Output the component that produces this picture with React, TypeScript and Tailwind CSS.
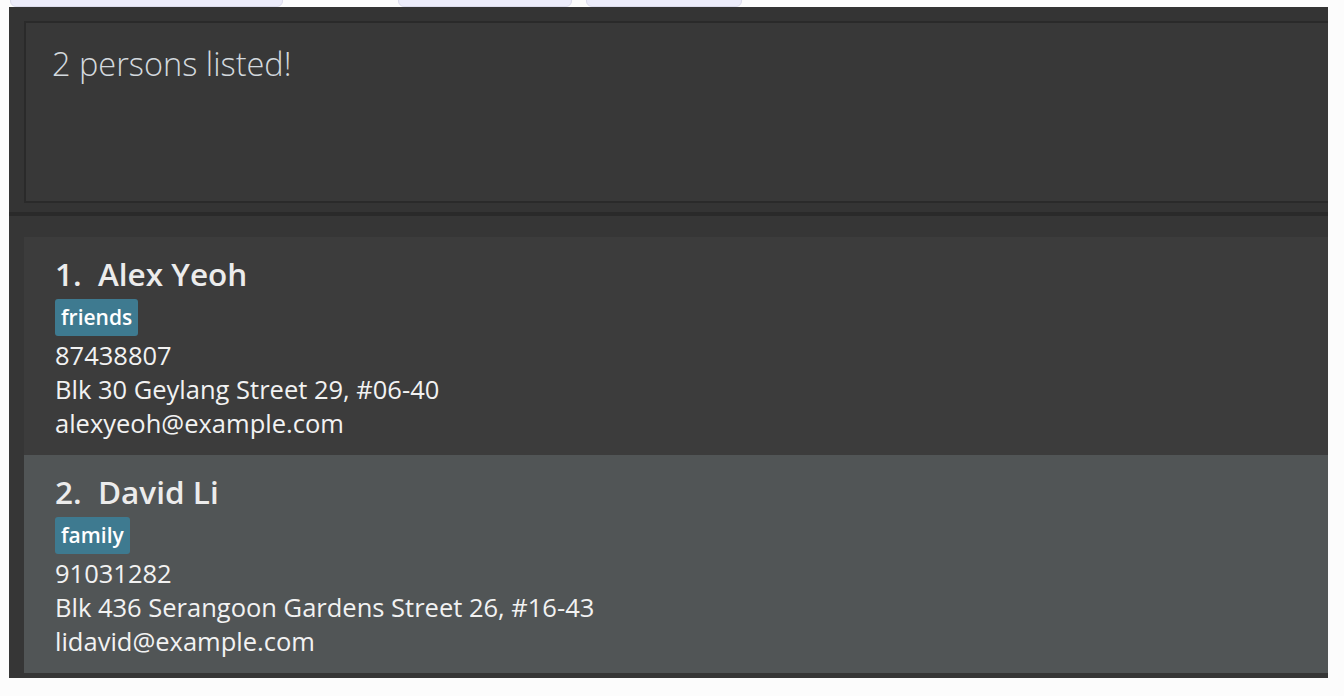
import React from "react";

interface Person {
  name: string;
  tag: string;
  phone: string;
  address: string;
  email: string;
}

const persons: Person[] = [
  {
    name: "Alex Yeoh",
    tag: "friends",
    phone: "87438807",
    address: "Blk 30 Geylang Street 29, #06-40",
    email: "alexyeoh@example.com",
  },
  {
    name: "David Li",
    tag: "family",
    phone: "91031282",
    address: "Blk 436 Serangoon Gardens Street 26, #16-43",
    email: "lidavid@example.com",
  },
];

const font = { fontFamily: '"Open Sans", "Noto Sans", sans-serif' };

const PersonCard = ({ person, index }: { person: Person; index: number }) => {
  const bg = index % 2 === 0 ? "bg-[#3c3c3c]" : "bg-[#515556]";
  return (
    <div className={`${bg} h-[218px] pl-[31px] pt-[16px] flex flex-col`}>
      <div className="text-[31.5px] font-semibold leading-[42px] text-[#ececec] whitespace-pre">
        {index + 1}.  {person.name}
      </div>
      <div className="flex mt-[4px]">
        <span className="bg-[#3e7a90] text-white text-[21px] font-semibold leading-[37px] px-[6px] rounded-[3px]">
          {person.tag}
        </span>
      </div>
      <div className="text-[25.5px] leading-[34px] text-[#f2f2f2] mt-[2px]">
        <div>{person.phone}</div>
        <div>{person.address}</div>
        <div>{person.email}</div>
      </div>
    </div>
  );
};

export default function App() {
  return (
    <div className="w-[1344px] h-[696px] bg-[#fcfcfc] overflow-hidden" style={font}>
      <div className="h-[7px] flex items-end overflow-hidden pl-[10px]">
        <div className="w-[273px] h-[30px] shrink-0 bg-[#ececfa] border border-[#dcdcec] rounded-md" />
        <div className="w-[174px] h-[30px] shrink-0 ml-[115px] bg-[#ececfa] border border-[#dcdcec] rounded-md" />
        <div className="w-[156px] h-[30px] shrink-0 ml-[14px] bg-[#ececfa] border border-[#dcdcec] rounded-md" />
      </div>
      <div className="ml-[9px] w-[1319px] h-[671px] bg-[#343434] overflow-hidden flex flex-col">
        <div className="pt-[14px] pl-[15px]">
          <div className="h-[182px] border-2 border-r-0 border-[#2a2a2a] bg-[#383838] pl-[26px] pt-[19px]">
            <div className="text-[32.5px] font-light leading-[44px] text-[#d3d9de]">2 persons listed!</div>
          </div>
        </div>
        <div className="h-[9px]" />
        <div className="h-[4px] bg-[#2a2a2a]" />
        <div className="flex-1 pt-[21px] pl-[15px] bg-[#363636]">
          {persons.map((p, i) => (
            <PersonCard key={p.email} person={p} index={i} />
          ))}
        </div>
      </div>
    </div>
  );
}
